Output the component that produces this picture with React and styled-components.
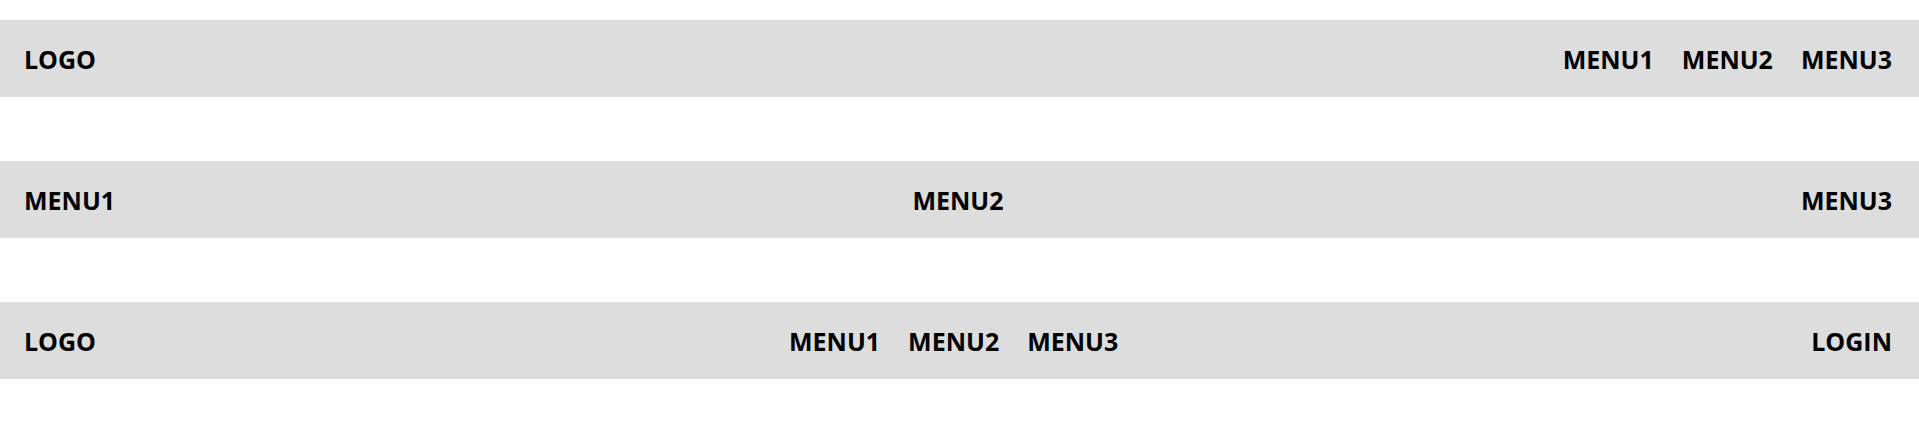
import React from 'react'
import styled, { createGlobalStyle } from 'styled-components'

const GlobalStyle = createGlobalStyle`
  body {
    margin: 0;
    background: #fff;
    font-family: "Open Sans", "Noto Sans", sans-serif;
  }
`

const Page = styled.div`
  display: flex;
  flex-direction: column;
  gap: 64px;
  padding-top: 20px;
`

const Header = styled.header`
  display: flex;
  justify-content: space-between;
  align-items: center;
  height: 77px;
  padding: 0 27px 0 24px;
  box-sizing: border-box;
  background: #dddddd;
`

const Item = styled.a`
  font-size: 25px;
  font-weight: 700;
  line-height: 36px;
  color: #000;
  text-decoration: none;
`

const Menu = styled.nav`
  display: flex;
  gap: 28px;
`

export default function App() {
  return (
    <>
      <GlobalStyle />
      <Page>
        <Header>
          <Item>LOGO</Item>
          <Menu>
            <Item>MENU1</Item>
            <Item>MENU2</Item>
            <Item>MENU3</Item>
          </Menu>
        </Header>
        <Header>
          <Item>MENU1</Item>
          <Item>MENU2</Item>
          <Item>MENU3</Item>
        </Header>
        <Header>
          <Item>LOGO</Item>
          <Menu>
            <Item>MENU1</Item>
            <Item>MENU2</Item>
            <Item>MENU3</Item>
          </Menu>
          <Item>LOGIN</Item>
        </Header>
      </Page>
    </>
  )
}
